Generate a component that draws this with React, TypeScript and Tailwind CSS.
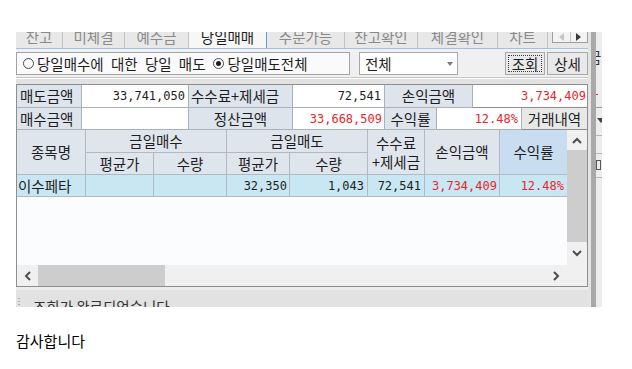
import React from "react";

function Chevron({ dir }: { dir: "up" | "down" | "left" | "right" }) {
  if (dir === "up")
    return (
      <svg width="10" height="7" viewBox="0 0 10 7">
        <polyline points="1,6 5,2 9,6" fill="none" stroke="#4d4d4d" strokeWidth="2" />
      </svg>
    );
  if (dir === "down")
    return (
      <svg width="10" height="7" viewBox="0 0 10 7">
        <polyline points="1,1 5,5 9,1" fill="none" stroke="#4d4d4d" strokeWidth="2" />
      </svg>
    );
  if (dir === "left")
    return (
      <svg width="7" height="10" viewBox="0 0 7 10">
        <polyline points="6,1 2,5 6,9" fill="none" stroke="#4d4d4d" strokeWidth="2" />
      </svg>
    );
  return (
    <svg width="7" height="10" viewBox="0 0 7 10">
      <polyline points="1,1 5,5 1,9" fill="none" stroke="#4d4d4d" strokeWidth="2" />
    </svg>
  );
}

function Tab({ label, className, active }: { label: string; className: string; active?: boolean }) {
  return (
    <div
      className={
        "flex h-full items-center justify-center pb-[6px] " +
        className +
        (active
          ? " border-r border-[#6f9bd3] bg-[#f7f7f7] text-[#1e1e1e]"
          : " border-r border-[#c2c2c2] text-[#8a8a8a]")
      }
    >
      <span className="whitespace-nowrap">{label}</span>
    </div>
  );
}

function Radio({ checked }: { checked?: boolean }) {
  return (
    <div className="flex h-[11px] w-[11px] items-center justify-center rounded-full border border-[#4a4a4a] bg-white">
      {checked && <div className="h-[5px] w-[5px] rounded-full bg-[#1e1e1e]" />}
    </div>
  );
}

export default function App() {
  return (
    <div className="h-[369px] w-[632px] overflow-hidden bg-white text-[#1e1e1e] [font-family:'Noto_Sans_CJK_KR','Noto_Sans',sans-serif]">
      <div className="pl-[16px] pt-[32px]">
        <div className="flex h-[275px] w-[586px] overflow-hidden">
          {/* main window column */}
          <div className="flex w-[572px] flex-col bg-[#f0f0f0] text-[14.5px] leading-[16px]">
            {/* tabs */}
            <div className="flex h-[16px] shrink-0 overflow-hidden bg-[#e8e8e8]">
              <Tab label="잔고" className="w-[47px]" />
              <Tab label="미체결" className="w-[62px]" />
              <Tab label="예수금" className="w-[64px]" />
              <Tab label="당일매매" className="w-[78px]" active />
              <Tab label="주문가능" className="w-[78px]" />
              <Tab label="잔고확인" className="w-[73px]" />
              <Tab label="체결확인" className="w-[80px]" />
              <Tab label="차트" className="w-[50px]" />
              <div className="ml-[4px] flex h-[11px] w-[36px] border-x border-b border-[#9e9e9e] bg-[#f3f3f3]">
                <div className="flex flex-1 items-center justify-center border-r border-[#c8c8c8]">
                  <div className="h-0 w-0 border-y-[4px] border-r-[5px] border-y-transparent border-r-[#c4c4c4]" />
                </div>
                <div className="flex flex-1 items-center justify-center">
                  <div className="h-0 w-0 border-y-[4px] border-l-[5px] border-y-transparent border-l-[#3a3a3a]" />
                </div>
              </div>
            </div>
            <div className="h-px shrink-0 bg-[#a3c0e2]" />
            <div className="h-[3px] shrink-0" />

            {/* option row */}
            <div className="flex h-[23px] shrink-0">
              <div className="flex w-[334px] items-center border border-[#a3a3a3] bg-[#fafafa] pl-[6px]">
                <Radio />
                <span className="ml-[3px] whitespace-nowrap [word-spacing:4px]">당일매수에 대한 당일 매도</span>
                <div className="ml-[8px]">
                  <Radio checked />
                </div>
                <span className="ml-[3px] whitespace-nowrap">당일매도전체</span>
              </div>
              <div className="ml-[9px] flex w-[99px] items-center border border-[#a9a9a9] bg-white pl-[5px]">
                <span className="flex-1">전체</span>
                <div className="mr-[4px] h-0 w-0 border-x-[3.5px] border-t-[4px] border-x-transparent border-t-[#7a7a7a]" />
              </div>
              <div className="flex-1" />
              <div className="flex w-[40px] items-center justify-center border border-[#a8a8a8] bg-[#e9e9e9] p-[2px]">
                <div className="flex h-full w-full items-center justify-center border border-dotted border-[#3a3a3a]">
                  조회
                </div>
              </div>
              <div className="ml-[2px] flex w-[41px] items-center justify-center border border-[#a8a8a8] bg-[#e9e9e9]">
                상세
              </div>
            </div>

            {/* splitter */}
            <div className="flex h-[9px] shrink-0 flex-col">
              <div className="h-[2px]" />
              <div className="h-px bg-[#c6c6c6]" />
              <div className="h-px bg-white" />
              <div className="flex-1 bg-[#e2e2e2]" />
            </div>

            {/* info grid */}
            <div className="flex shrink-0 flex-col border-l border-t border-[#8e8e8e]">
              <div className="flex h-[23px]">
                <div className="flex w-[65px] items-center border-b border-r border-[#a9b1bb] bg-[#dde4ec] pl-[3px]">매도금액</div>
                <div className="flex w-[107px] items-center justify-end border-b border-r border-[#a9b1bb] bg-white pr-[3px] text-[12px] [font-family:'DejaVu_Sans_Mono',monospace]">
                  33,741,050
                </div>
                <div className="flex w-[104px] items-center border-b border-r border-[#a9b1bb] bg-[#dde4ec] pl-[2px] whitespace-nowrap">수수료+제세금</div>
                <div className="flex w-[92px] items-center justify-end border-b border-r border-[#a9b1bb] bg-white pr-[3px] text-[12px] [font-family:'DejaVu_Sans_Mono',monospace]">
                  72,541
                </div>
                <div className="flex w-[88px] items-center justify-center border-b border-r border-[#a9b1bb] bg-[#dde4ec]">손익금액</div>
                <div className="flex flex-1 items-center justify-end border-b border-r border-[#8e8e8e] bg-white pr-[1px] text-[12px] text-[#e8262b] [font-family:'DejaVu_Sans_Mono',monospace]">
                  3,734,409
                </div>
              </div>
              <div className="flex h-[22px]">
                <div className="flex w-[65px] items-center border-b border-r border-[#a9b1bb] bg-[#dde4ec] pl-[3px]">매수금액</div>
                <div className="w-[107px] border-b border-r border-[#a9b1bb] bg-white" />
                <div className="flex w-[104px] items-center justify-center border-b border-r border-[#a9b1bb] bg-[#dde4ec]">정산금액</div>
                <div className="flex w-[92px] items-center justify-end border-b border-r border-[#a9b1bb] bg-white pr-[2px] text-[12px] text-[#e8262b] [font-family:'DejaVu_Sans_Mono',monospace]">
                  33,668,509
                </div>
                <div className="flex w-[52px] items-center justify-center border-b border-r border-[#a9b1bb] bg-[#dde4ec]">수익률</div>
                <div className="flex w-[85px] items-center justify-end border-b border-r border-[#a9b1bb] bg-white pr-[3px] text-[12px] text-[#e8262b] [font-family:'DejaVu_Sans_Mono',monospace]">
                  12.48%
                </div>
                <div className="flex flex-1 items-center justify-center border-b border-r border-[#8e8e8e] bg-[#e8e8e8]">거래내역</div>
              </div>
            </div>

            {/* table */}
            <div className="flex h-[157px] shrink-0 flex-col border-x border-b border-[#8e8e8e] bg-[#fbfcfe]">
              <div className="flex h-[135px]">
                <div className="flex flex-1 flex-col">
                  <div className="grid grid-cols-[69px_68px_73px_63px_78px_57px_75px_67px] grid-rows-[23px_22px_22px]">
                    <div className="row-span-2 flex items-center justify-center border-b border-r border-[#b1b9c3] bg-[#dfe5ec]">종목명</div>
                    <div className="col-span-2 flex items-center justify-center border-b border-r border-[#b1b9c3] bg-[#dfe5ec]">금일매수</div>
                    <div className="col-span-2 flex items-center justify-center border-b border-r border-[#b1b9c3] bg-[#dfe5ec]">금일매도</div>
                    <div className="row-span-2 flex flex-col items-center justify-center gap-[3px] border-b border-r border-[#b1b9c3] bg-[#dfe5ec]">
                      <span>수수료</span>
                      <span className="whitespace-nowrap">+제세금</span>
                    </div>
                    <div className="row-span-2 flex items-center justify-center border-b border-r border-[#b1b9c3] bg-[#dfe5ec]">손익금액</div>
                    <div className="row-span-2 flex items-center justify-center border-b border-[#b1b9c3] bg-[#c8ddf0]">수익률</div>
                    <div className="flex items-center justify-center border-b border-r border-[#b1b9c3] bg-[#dfe5ec]">평균가</div>
                    <div className="flex items-center justify-center border-b border-r border-[#b1b9c3] bg-[#dfe5ec]">수량</div>
                    <div className="flex items-center justify-center border-b border-r border-[#b1b9c3] bg-[#dfe5ec]">평균가</div>
                    <div className="flex items-center justify-center border-b border-r border-[#b1b9c3] bg-[#dfe5ec]">수량</div>

                    <div className="flex items-center border-b border-r border-[#b1b9c3] bg-[#c8e7f2] pl-[1px]">이수페타</div>
                    <div className="border-b border-r border-[#b1b9c3] bg-[#c8e7f2]" />
                    <div className="border-b border-r border-[#b1b9c3] bg-[#c8e7f2]" />
                    <div className="flex items-center justify-end border-b border-r border-[#b1b9c3] bg-[#c8e7f2] pr-[2px] text-[12px] [font-family:'DejaVu_Sans_Mono',monospace]">32,350</div>
                    <div className="flex items-center justify-end border-b border-r border-[#b1b9c3] bg-[#c8e7f2] pr-[3px] text-[12px] [font-family:'DejaVu_Sans_Mono',monospace]">1,043</div>
                    <div className="flex items-center justify-end border-b border-r border-[#b1b9c3] bg-[#c8e7f2] pr-[3px] text-[12px] [font-family:'DejaVu_Sans_Mono',monospace]">72,541</div>
                    <div className="flex items-center justify-end border-b border-r border-[#b1b9c3] bg-[#c8e7f2] pr-[2px] text-[12px] text-[#e8262b] [font-family:'DejaVu_Sans_Mono',monospace]">3,734,409</div>
                    <div className="flex items-center justify-end border-b border-[#b1b9c3] bg-[#c8e7f2] pr-[3px] text-[12px] text-[#e8262b] [font-family:'DejaVu_Sans_Mono',monospace]">12.48%</div>
                  </div>
                </div>
                {/* vertical scrollbar */}
                <div className="flex w-[20px] flex-col bg-[#f0f0f0]">
                  <div className="flex h-[20px] items-center justify-center pt-[1px]">
                    <Chevron dir="up" />
                  </div>
                  <div className="h-[92px] bg-[#cdcdcd]" />
                  <div className="flex flex-1 items-center justify-center">
                    <Chevron dir="down" />
                  </div>
                </div>
              </div>
              {/* horizontal scrollbar */}
              <div className="flex h-[21px] bg-[#f0f0f0]">
                <div className="flex w-[21px] items-center justify-center">
                  <Chevron dir="left" />
                </div>
                <div className="w-[127px] bg-[#cdcdcd]" />
                <div className="flex-1" />
                <div className="flex w-[21px] items-center justify-center">
                  <Chevron dir="right" />
                </div>
                <div className="w-[20px]" />
              </div>
            </div>

            {/* status bar */}
            <div className="h-[3px] shrink-0 bg-[#ececec]" />
            <div className="flex min-h-0 flex-1 items-start overflow-hidden bg-[#e2e2e2] pt-[7px]">
              <div className="mt-[1px] flex flex-col gap-[2px] pl-[2px]">
                <div className="h-px w-[2px] bg-[#b0b0b0]" />
                <div className="h-px w-[2px] bg-[#b0b0b0]" />
                <div className="h-px w-[2px] bg-[#b0b0b0]" />
                <div className="h-px w-[2px] bg-[#b0b0b0]" />
              </div>
              <span className="ml-[13px] mt-[2px] whitespace-nowrap text-[#333]">조회가 완료되었습니다</span>
            </div>
          </div>

          {/* right strip (neighbouring panel, cut off) */}
          <div className="flex w-[14px]">
            <div className="w-[3px] bg-[#e4e4e4]" />
            <div className="w-[5px] bg-[#a8a8a8]" />
            <div className="relative w-[6px] overflow-hidden bg-[#ececec] text-[14.5px] leading-[16px]">
              <span className="absolute left-[-8px] top-[17px] text-[#333]">금</span>
              <div className="absolute left-0 top-[62px] h-px w-[2px] bg-[#e8262b]" />
              <div className="absolute left-0 top-[75px] h-px w-[6px] bg-[#9a9a9a]" />
              <div className="absolute left-[1px] top-[86px] h-0 w-0 border-x-[4px] border-t-[5px] border-x-transparent border-t-[#444]" />
              <div className="absolute left-0 top-[103px] h-px w-[6px] bg-[#b5b5b5]" />
              <div className="absolute left-0 top-[121px] h-px w-[6px] bg-[#b5b5b5]" />
              <div className="absolute left-0 top-[128px] h-[10px] w-[5px] border border-[#555]" />
              <div className="absolute left-0 top-[145px] h-px w-[6px] bg-[#b5b5b5]" />
            </div>
          </div>
        </div>

        <div className="mt-[24px] text-[15px] leading-[20px] text-black">감사합니다</div>
      </div>
    </div>
  );
}
